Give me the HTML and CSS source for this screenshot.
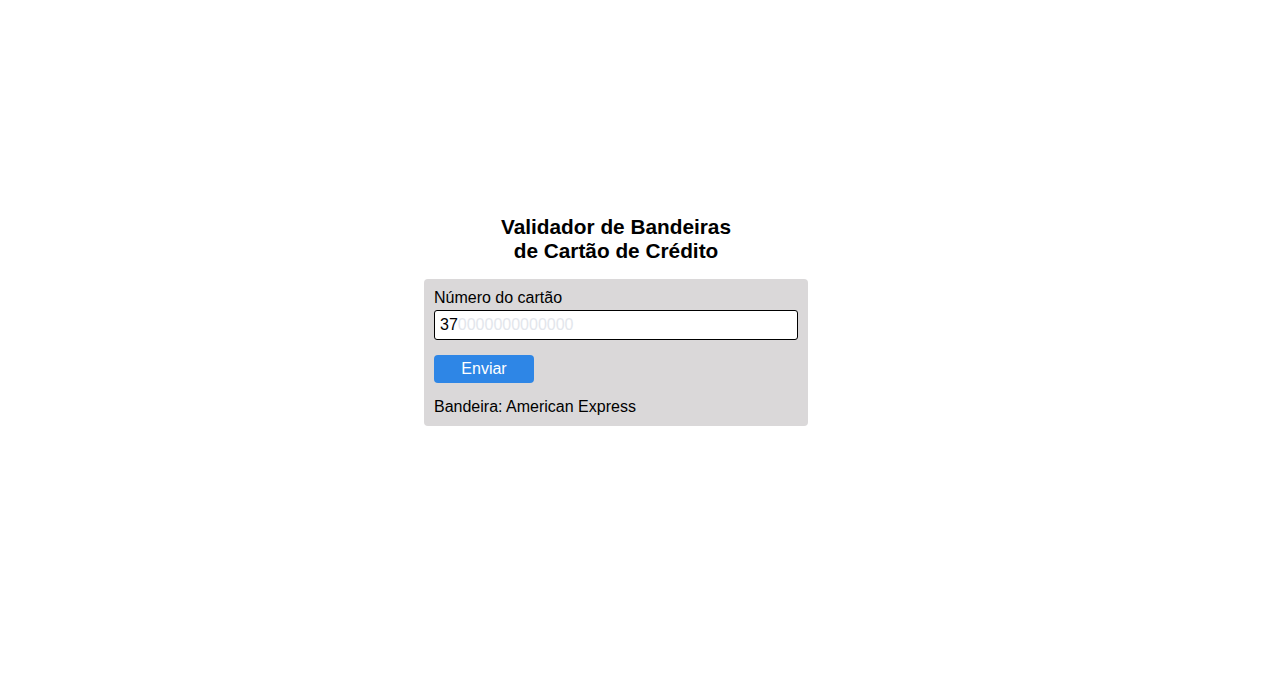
FILE: index.html
```html
<!DOCTYPE html>
<html lang="pt-BR">
<head>
<meta charset="utf-8">
<title>Validador de Bandeiras</title>
<link rel="stylesheet" href="styles.css">
</head>
<body>
<main class="page">
  <h1 class="title">Validador de Bandeiras<br>de Cartão de Crédito</h1>
  <form class="card">
    <label class="label" for="num">Número do cartão</label>
    <div class="input" id="num">37<span class="masked">0000000000000</span></div>
    <button type="button" class="btn">Enviar</button>
    <p class="result">Bandeira: American Express</p>
  </form>
</main>
</body>
</html>
```

FILE: styles.css
```css
html, body {
  margin: 0;
  padding: 0;
  background: #ffffff;
  font-family: "Liberation Sans", Arial, sans-serif;
  color: #000;
}
.page {
  display: flex;
  flex-direction: column;
  align-items: center;
  padding-top: 215px;
  padding-right: 41px;
}
.title {
  margin: 0 0 16px 0;
  font-size: 20.8px;
  font-weight: bold;
  line-height: 24px;
  text-align: center;
}
.card {
  width: 364px;
  padding: 10px;
  background: #dad8d9;
  border-radius: 4px;
  display: flex;
  flex-direction: column;
  align-items: flex-start;
}
.label {
  font-size: 16px;
  line-height: 18px;
  margin-bottom: 3px;
}
.input {
  box-sizing: border-box;
  width: 364px;
  height: 30px;
  border: 1px solid #000;
  border-radius: 3px;
  background: #fff;
  padding: 0 5px;
  font-size: 16px;
  line-height: 28px;
}
.masked {
  color: #e3e6ec;
}
.btn {
  margin-top: 15px;
  width: 100px;
  height: 28px;
  border: none;
  border-radius: 4px;
  background: #2e86e6;
  color: #fff;
  font-family: "Liberation Sans", Arial, sans-serif;
  font-size: 16px;
  padding: 0;
}
.result {
  margin: 15px 0 0 0;
  font-size: 16px;
  line-height: 18px;
}
```
